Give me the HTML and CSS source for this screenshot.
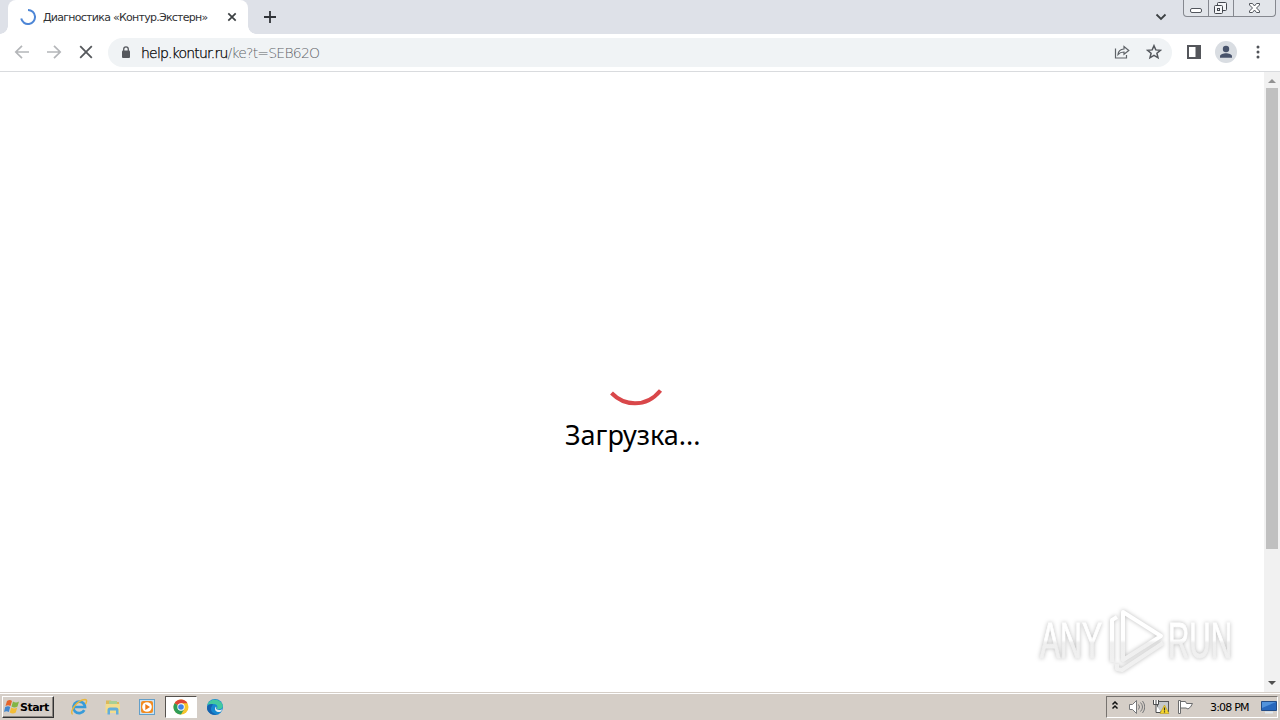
FILE: index.html
```html
<!DOCTYPE html>
<html lang="ru">
<head>
    <meta charset="UTF-8">
    <title>Диагностика «Контур.Экстерн»</title>
    <link rel="stylesheet" href="styles.css">
</head>
<body>
    <!-- Tabs -->
    <div class="tabstrip">
        <div class="tab">
            <svg class="tab-spinner" width="16" height="16" viewBox="0 0 16 16" fill="none" stroke="#4d86d6" stroke-width="2"><path d="M8 1a7 7 0 1 1-6.800 8.600"/></svg>
            <span class="tab-title">Диагностика «Контур.Экстерн»</span>
            <svg class="tab-close" width="10" height="10" viewBox="0 0 10 10" stroke="#3c4043" stroke-width="1.7"><path d="M1.300 1.300l7.400 7.400M8.700 1.300L1.300 8.700"/></svg>
        </div>
        <svg class="new-tab" width="12" height="12" viewBox="0 0 12 12" stroke="#303338" stroke-width="1.8"><path d="M6 0v12M0 6h12"/></svg>
        <svg class="tab-search" width="12" height="8" viewBox="0 0 12 8" fill="none" stroke="#3c4043" stroke-width="1.8"><path d="M1.500 1.500L6 6l4.500-4.500"/></svg>
        <div class="window-buttons">
            <div class="win-btn win-min"><svg width="24" height="16" viewBox="0 0 24 16"><rect x="6.500" y="8.500" width="11" height="4" rx="1.500" fill="#fff" stroke="#52565d"/></svg></div>
            <div class="win-btn win-max"><svg width="24" height="16" viewBox="0 0 24 16" fill="#f4f5f7" stroke="#43474e"><rect x="8.500" y="2.500" width="9" height="8" rx="1"/><rect x="5.500" y="5.500" width="8" height="8" rx="1"/><rect x="8.500" y="8.500" width="2" height="2"/></svg></div>
            <div class="win-btn win-close"><svg width="40" height="16" viewBox="0 0 40 16" fill="#fff" stroke="#52565d"><path d="M15.500 3.500h3l2 2.500 2-2.500h3v1.500l-3 3 3 3v1.500h-3l-2-2.500-2 2.500h-3V11l3-3-3-3z"/></svg></div>
        </div>
    </div>

    <!-- Toolbar -->
    <div class="toolbar">
        <svg class="nav" width="16" height="16" viewBox="0 0 16 16" fill="none" stroke="#b4b6b9" stroke-width="1.7"><path d="M15 8H2M8 1.800L1.800 8 8 14.200"/></svg>
        <svg class="nav" width="16" height="16" viewBox="0 0 16 16" fill="none" stroke="#b4b6b9" stroke-width="1.7"><path d="M1 8h13M8 1.800L14.200 8 8 14.200"/></svg>
        <svg class="nav" width="16" height="16" viewBox="0 0 16 16" stroke="#55585c" stroke-width="1.8"><path d="M2.200 2.200l11.600 11.600M13.800 2.200L2.200 13.800"/></svg>
        <div class="omnibox">
            <svg class="lock" width="10" height="13" viewBox="0 0 10 13"><rect x="1" y="4.500" width="8" height="7.500" rx="1" fill="#55585d"/><path d="M2.700 5V3.200a2.300 2.300 0 0 1 4.600 0V5" fill="none" stroke="#55585d" stroke-width="1.300"/></svg>
            <div class="url"><span class="host">help.kontur.ru</span><span class="path">/ke?t=SEB62O</span></div>
            <svg class="share" width="16" height="16" viewBox="0 0 16 16" fill="none" stroke="#5f6368" stroke-width="1.200"><path d="M1.500 4.500v9.500h11v-3"/><path d="M4 10.500c.3-3.500 2.500-5.300 6-5.500V2.500L14.800 6.500 10 10.300V8C7.500 8 5.500 8.800 4 10.500z"/></svg>
            <svg class="star" width="16" height="16" viewBox="0 0 16 16" fill="none" stroke="#54585d" stroke-width="1.500"><path d="M8 1.700l1.800 4.200 4.600.4-3.500 3 1.100 4.500L8 11.400l-4 2.400 1.100-4.500-3.500-3 4.600-.4z"/></svg>
        </div>
        <svg class="side-panel" width="14" height="14" viewBox="0 0 14 14"><path d="M0 0h14v14H0zM2 2v10h6.500V2z" fill="#54565b" fill-rule="evenodd"/></svg>
        <svg class="avatar" width="22" height="22" viewBox="0 0 22 22"><circle cx="11" cy="11" r="11" fill="#d9dde2"/><g fill="#48536b"><circle cx="11" cy="8" r="3.200"/><path d="M5 16.800v-1.500c0-2 3.500-3 6-3s6 1 6 3v1.500z"/></g></svg>
        <svg class="menu" width="4" height="14" viewBox="0 0 4 14" fill="#505358"><circle cx="2" cy="2" r="1.500"/><circle cx="2" cy="7" r="1.500"/><circle cx="2" cy="12" r="1.500"/></svg>
    </div>

    <!-- Page -->
    <div class="viewport">
        <div class="page">
            <svg class="spinner" width="54" height="18" viewBox="0 0 54 18" fill="none"><path d="M2.500 5Q12.500 15.300 26 15.300Q41 15.300 51.500 2.500" stroke="#d9474a" stroke-width="4"/></svg>
            <div class="loading">Загрузка...</div>
            <svg class="watermark" width="220" height="72" viewBox="0 0 220 72">
                <defs>
                    <linearGradient id="fade" gradientUnits="userSpaceOnUse" x1="0" y1="0" x2="0" y2="72">
                        <stop offset="0.500" stop-color="#fff"/>
                        <stop offset="0.540" stop-color="#efefef"/>
                        <stop offset="1" stop-color="#f1f1f1"/>
                    </linearGradient>
                </defs>
                <g class="wm-text" fill="url(#fade)" stroke="url(#fade)" stroke-width="1">
                    <text x="10" y="54" textLength="62" lengthAdjust="spacingAndGlyphs">ANY</text>
                    <text x="138" y="54" textLength="64" lengthAdjust="spacingAndGlyphs">RUN</text>
                </g>
                <g class="wm-logo" fill="none" stroke="url(#fade)" stroke-width="4" stroke-linejoin="round">
                    <path d="M93 8l38 24-38 24z"/>
                    <path d="M87 13l-5 3v42"/>
                    <path d="M87 60v5l5 1 41-27"/>
                </g>
            </svg>
        </div>
        <div class="scrollbar">
            <svg width="16" height="16" viewBox="0 0 16 16"><path d="M4 11l4-4 4 4z" fill="#929292"/></svg>
            <div class="thumb"></div>
            <svg class="arrow-down" width="16" height="16" viewBox="0 0 16 16"><path d="M4 5l4 4 4-4z" fill="#505050"/></svg>
        </div>
    </div>

    <!-- Taskbar -->
    <div class="taskbar">
        <div class="start">
            <svg width="16" height="16" viewBox="0 0 16 16"><path d="M3 2q3-2 5 0L6.500 7Q4 5.500 1.500 7z" fill="#e5652b"/><path d="M9 2.500q3 2 6 0L13.500 7.500q-3 2-6 0z" fill="#82b546"/><path d="M1.200 8q3-1.500 5 0L4.800 13Q2.500 11.500 0 13z" fill="#4387ce"/><path d="M7.200 8.500q3 2 6 0L11.800 13.500q-3 2-6 0z" fill="#f3bd37"/></svg>
            <span>Start</span>
        </div>
        <div class="quick">
            <div class="app"><svg width="18" height="18" viewBox="0 0 18 18" fill="none"><path d="M14.300 12.200A5.800 5.800 0 1 1 15 9H4" stroke="#379bd9" stroke-width="2.700"/><path d="M2.500 16.500C-1 14 7 2 15 1.500c2.500 0 1.500 3 .5 4.500" stroke="#e9b73c" stroke-width="1.500"/></svg></div>
            <div class="app"><svg width="18" height="18" viewBox="0 0 18 18"><path d="M2 2.500h5l1 1.500h7v10H2z" fill="#dcb95a"/><path d="M5 3h8v4H5z" fill="#a9cf94"/><path d="M1.500 6H16v9H1.500z" fill="#f3dc8d"/><path d="M3.500 16.500V12q0-2.500 2.500-2.500h6q2.500 0 2.500 2.500v4.500H12V12.500H6v4z" fill="#63aedb"/></svg></div>
            <div class="app"><svg width="18" height="18" viewBox="0 0 18 18"><rect x="1.500" y="1.500" width="15" height="15" fill="#c9e3f5" stroke="#639fc9"/><rect x="3" y="3" width="12" height="12" rx="2" fill="#f28c22"/><circle cx="9" cy="9" r="4.800" fill="#fff"/><path d="M7.300 6L12 9l-4.700 3z" fill="#ed7a18"/></svg></div>
            <div class="app active"><svg width="16" height="16" viewBox="0 0 16 16"><circle cx="8" cy="8" r="7.500" fill="#f6c52d"/><path d="M8 8L1.500 4.250A7.500 7.500 0 0 1 14.500 4.250H8z" fill="#de4637"/><path d="M1.500 4.250A7.500 7.500 0 0 0 8 15.500L11.200 9.900 8 8z" fill="#2f9d58"/><circle cx="8" cy="8" r="3.700" fill="#fff"/><circle cx="8" cy="8" r="2.800" fill="#4083e8"/></svg></div>
            <div class="app"><svg width="18" height="18" viewBox="0 0 18 18"><circle cx="9" cy="9" r="8" fill="#1688d1"/><path d="M1.500 7C3 0 14 0 16.500 6.500 18 11 13 12 10.500 11c2-2 .5-5-2.500-5-3 0-5 0-6.500 1z" fill="#43c9a0"/><path d="M6 8c-3 4 1 9 7 8-6 2.500-12-1-12-6 0-3 3-4.500 6-4z" fill="#1762ad"/><path d="M10 8.500c.8 1-.5 2 .5 2.800 1.500 1.200 4.500 1 6-.3l-1.500 2.500c-4 2-8-2-5-5z" fill="#e7eef0"/></svg></div>
        </div>
        <div class="tray">
            <svg class="chevrons" width="8" height="10" viewBox="0 0 8 10" fill="none" stroke="#111" stroke-width="1.500"><path d="M1.500 3.500L4 1l2.500 2.500M1.500 7.500L4 5l2.500 2.500"/></svg>
            <svg class="tray-icon" width="16" height="16" viewBox="0 0 16 16" fill="none" stroke="#77787a"><path d="M.5 5.500h3l4-4v13l-4-4h-3z" fill="#fff"/><path d="M9.500 5.500q2 2.500 0 5M11.500 3.500q4 4.500 0 9M13.500 2q4.500 6 0 12"/></svg>
            <svg class="tray-icon net" width="18" height="16" viewBox="0 0 18 16"><rect x="4.500" y="2.500" width="11" height="10" fill="#c5c9cb" stroke="#55585a"/><path d="M.5 1v4.500h5V1M3 1v4.500M3 5.500v8h5" fill="#fff" stroke="#4b4d4f"/><path d="M11.500 6l4.500 8.500H7z" fill="#f7d62c" stroke="#b99a19" stroke-width=".6"/><path d="M11.500 8.500v3M11.500 12.300v1.200" stroke="#333" stroke-width="1.200"/></svg>
            <svg class="tray-icon flag" width="16" height="16" viewBox="0 0 16 16"><path d="M.5 1.500h2v13h-2zM2.500 2.500h5l1 2h6q-1.500 4-4.500 5.500l-2-1h-5.500z" fill="#fff" stroke="#6b6c6d"/></svg>
            <span class="clock">3:08 PM</span>
            <svg class="desktop" width="16" height="14" viewBox="0 0 16 14"><path d="M.5 1.500h15v9H.5z" fill="#2868bd" stroke="#244d87"/><path d="M1 2h14L1 8z" fill="#5293dc"/><path d="M4 12.500h8" stroke="#dfe8ef" stroke-width="2"/></svg>
        </div>
    </div>
</body>
</html>
```
FILE: styles.css
```css
* {
    box-sizing: border-box;
}
body {
    margin: 0;
    width: 1280px;
    height: 720px;
    overflow: hidden;
    display: flex;
    flex-direction: column;
    background-color: #fff;
    font-family: "DejaVu Sans", sans-serif;
}
svg {
    display: block;
    flex: none;
}

/* Tabs */
.tabstrip {
    height: 34px;
    display: flex;
    align-items: center;
    background-color: #dee1e8;
    padding-left: 8px;
}
.tab {
    width: 240px;
    height: 34px;
    display: flex;
    align-items: center;
    padding-left: 12px;
    background-color: #fff;
    border-radius: 8px 8px 0 0;
    position: relative;
}
.tab::before,
.tab::after {
    content: "";
    position: absolute;
    bottom: 0;
    width: 8px;
    height: 8px;
}
.tab::before {
    left: -8px;
    background: radial-gradient(circle at 0 0, transparent 7.5px, #fff 8px);
}
.tab::after {
    right: -8px;
    background: radial-gradient(circle at 100% 0, transparent 7.5px, #fff 8px);
}
.tab-title {
    width: 176px;
    margin-left: 7px;
    font-size: 11px;
    letter-spacing: -0.73px;
    white-space: nowrap;
    color: #303134;
}
.tab-close {
    margin-left: 8px;
}
.new-tab {
    margin-left: 16px;
}
.tab-search {
    margin-left: auto;
    margin-right: 16px;
}
.window-buttons {
    display: flex;
    align-self: flex-start;
    width: 93px;
    height: 17px;
    margin-right: 4px;
    border: 1px solid #85888f;
    border-top: 0;
    border-radius: 0 0 4px 4px;
    background-color: #e2e5ea;
}
.win-btn + .win-btn {
    border-left: 1px solid #85888f;
}
.win-min {
    width: 24px;
}
.win-max {
    width: 25px;
}
.win-close {
    width: 42px;
}

/* Toolbar */
.toolbar {
    height: 38px;
    display: flex;
    align-items: center;
    padding: 0 20px 1px 14px;
    border-bottom: 1px solid #d9dbde;
}
.nav {
    margin-right: 16px;
}
.omnibox {
    width: 1064px;
    height: 29px;
    margin-left: -2px;
    display: flex;
    align-items: center;
    padding: 0 10px 0 13px;
    border-radius: 15px;
    background-color: #f0f3f5;
}
.url {
    margin: 1px 0 0 10px;
    font-weight: 200;
    font-size: 14px;
    line-height: 20px;
    letter-spacing: -0.8px;
    white-space: nowrap;
}
.host {
    color: #000;
    -webkit-text-stroke: 0.25px #000;
}
.path {
    color: #5f6368;
}
.share {
    margin-left: auto;
    margin-right: 16px;
}
.side-panel {
    margin-left: 15px;
}
.avatar {
    margin-left: 14px;
}
.menu {
    margin-left: auto;
}

/* Page */
.viewport {
    height: 620px;
    display: flex;
}
.page {
    width: 1264px;
    position: relative;
    padding-top: 316px;
}
.spinner {
    margin-left: 609px;
}
.loading {
    margin: 12px 0 0 565px;
    font-family: "Noto Sans", sans-serif;
    font-size: 27px;
    line-height: 34px;
    white-space: nowrap;
    color: #000;
}
.watermark {
    position: absolute;
    left: 1030px;
    top: 532px;
}
.wm-text {
    font-family: "Liberation Sans", sans-serif;
    font-size: 50px;
    filter: drop-shadow(0 0 2px #bbb);
}
.wm-logo {
    filter: drop-shadow(0 0 2px #bbb);
}
.scrollbar {
    width: 16px;
    display: flex;
    flex-direction: column;
    background-color: #f1f1f1;
}
.thumb {
    width: 12px;
    height: 461px;
    margin-left: 2px;
    background-color: #c0c0c0;
}
.arrow-down {
    margin-top: auto;
}

/* Taskbar */
.taskbar {
    height: 28px;
    display: flex;
    align-items: center;
    padding: 1px 2px 0 2px;
    background-color: #d5cec7;
    border-top: 1px solid #d5cec7;
    box-shadow: inset 0 1px 0 #fff;
}
.start {
    width: 52px;
    height: 22px;
    display: flex;
    align-items: center;
    border: 1px solid #fff;
    border-right-color: #333;
    border-bottom-color: #333;
    box-shadow: inset -1px -1px 0 #8a8580;
    padding-left: 1px;
    font-size: 11px;
    font-weight: bold;
    letter-spacing: -0.5px;
    color: #000;
}
.quick {
    display: flex;
    margin-left: 9px;
    gap: 2px;
}
.app {
    width: 32px;
    height: 22px;
    display: flex;
    align-items: center;
    justify-content: center;
}
.active {
    background-color: #fff;
    border: 1px solid #56524e;
    border-right-color: #fff;
    border-bottom-color: #fff;
}
.tray {
    width: 172px;
    height: 22px;
    margin-left: auto;
    padding-left: 4px;
    display: flex;
    align-items: center;
    border: 1px solid #77736f;
    border-right-color: #fff;
    border-bottom-color: #fff;
}
.chevrons {
    margin: 0 10px 2px 0;
}
.net {
    margin-left: 8px;
}
.flag {
    margin-left: 7px;
}
.clock {
    width: 50px;
    margin-left: 16px;
    font-size: 11px;
    letter-spacing: -0.8px;
    white-space: nowrap;
    color: #000;
}
.desktop {
    margin-left: 1px;
}
```
